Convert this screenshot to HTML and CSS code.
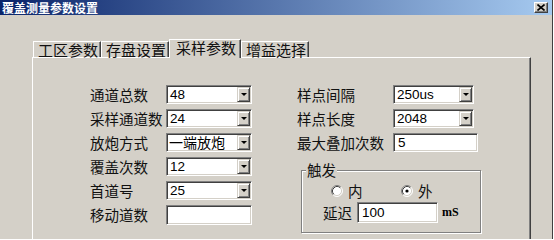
FILE: index.html
```html
<!DOCTYPE html>
<html lang="zh-CN">
<head>
<meta charset="utf-8">
<title>覆盖测量参数设置</title>
<link rel="stylesheet" href="styles.css">
</head>
<body>
<div class="window">
  <div class="titlebar">
    <span class="title">覆盖测量参数设置</span>
    <span class="close"><svg width="8" height="7" viewBox="0 0 8 7"><path d="M0.5 0.5 L7.5 6.5 M7.5 0.5 L0.5 6.5" stroke="#000" stroke-width="1.6"/></svg></span>
  </div>
  <div class="tabs">
    <div class="tab">工区参数</div>
    <div class="tab">存盘设置</div>
    <div class="tab active">采样参数</div>
    <div class="tab">增益选择</div>
  </div>
  <div class="panel">
    <div class="col-left">
      <span class="label">通道总数</span>
      <div class="combo"><span class="val">48</span><span class="btn"><i class="arrow"></i></span></div>
      <span class="label">采样通道数</span>
      <div class="combo"><span class="val">24</span><span class="btn"><i class="arrow"></i></span></div>
      <span class="label">放炮方式</span>
      <div class="combo"><span class="val cjk">一端放炮</span><span class="btn"><i class="arrow"></i></span></div>
      <span class="label">覆盖次数</span>
      <div class="combo"><span class="val">12</span><span class="btn"><i class="arrow"></i></span></div>
      <span class="label">首道号</span>
      <div class="combo"><span class="val">25</span><span class="btn"><i class="arrow"></i></span></div>
      <span class="label">移动道数</span>
      <div class="field wide"></div>
    </div>
    <div class="col-right">
      <div class="rgrid">
        <span class="label">样点间隔</span>
        <div class="combo narrow"><span class="val">250us</span><span class="btn"><i class="arrow"></i></span></div>
        <span class="label">样点长度</span>
        <div class="combo narrow"><span class="val">2048</span><span class="btn"><i class="arrow"></i></span></div>
        <span class="label">最大叠加次数</span>
        <div class="field mid"><span class="val">5</span></div>
      </div>
      <fieldset class="group">
        <legend>触发</legend>
        <div class="radios">
          <span class="radio first">
            <svg width="12" height="12" viewBox="0 0 12 12"><circle cx="6" cy="6" r="5" fill="#fff"/><path d="M2.11 9.89 A5.5 5.5 0 0 1 9.89 2.11" fill="none" stroke="#808080"/><path d="M9.89 2.11 A5.5 5.5 0 0 1 2.11 9.89" fill="none" stroke="#fff"/><path d="M2.82 9.18 A4.5 4.5 0 0 1 9.18 2.82" fill="none" stroke="#404040"/><path d="M9.18 2.82 A4.5 4.5 0 0 1 2.82 9.18" fill="none" stroke="#d4d0c8"/></svg>
            <span class="rtext">内</span>
          </span>
          <span class="radio">
            <svg width="12" height="12" viewBox="0 0 12 12"><circle cx="6" cy="6" r="5" fill="#fff"/><path d="M2.11 9.89 A5.5 5.5 0 0 1 9.89 2.11" fill="none" stroke="#808080"/><path d="M9.89 2.11 A5.5 5.5 0 0 1 2.11 9.89" fill="none" stroke="#fff"/><path d="M2.82 9.18 A4.5 4.5 0 0 1 9.18 2.82" fill="none" stroke="#404040"/><path d="M9.18 2.82 A4.5 4.5 0 0 1 2.82 9.18" fill="none" stroke="#d4d0c8"/><circle cx="6" cy="6" r="1.6" fill="#000"/></svg>
            <span class="rtext">外</span>
          </span>
        </div>
        <div class="delay">
          <span class="label">延迟</span>
          <div class="field delayf"><span class="val">100</span></div>
          <span class="unit">mS</span>
        </div>
      </fieldset>
    </div>
  </div>
</div>
</body>
</html>
```
FILE: styles.css
```css
body {
  margin: 0;
  background: #fff;
}

.window {
  width: 552px;
  height: 239px;
  overflow: hidden;
  background: #d4d0c8;
  border-right: 1px solid #404040;
  font-family: "Noto Sans CJK SC", "Liberation Sans", sans-serif;
  color: #000;
}

.titlebar {
  height: 15px;
  display: flex;
  align-items: center;
  background: linear-gradient(to right, #0a246a, #a6caf0);
}

.title {
  color: #fff;
  font-weight: bold;
  font-size: 12px;
  line-height: 15px;
  padding-left: 2px;
}

.close {
  margin-left: auto;
  margin-right: 4px;
  width: 14px;
  height: 11px;
  box-sizing: border-box;
  background: #d4d0c8;
  border: 1px solid;
  border-color: #fff #404040 #404040 #fff;
  box-shadow: inset -1px -1px #808080;
  display: flex;
  align-items: center;
  justify-content: center;
}

.close svg {
  display: block;
}

.tabs {
  display: flex;
  align-items: flex-end;
  height: 18px;
  margin-top: 24px;
  padding-left: 33px;
  font-size: 15px;
}

.tab {
  height: 16px;
  width: 68px;
  box-sizing: border-box;
  padding-left: 4px;
  border-top: 1px solid #fff;
  border-left: 1px solid #fff;
  border-right: 1px solid #404040;
  box-shadow: inset -1px 0 #808080;
  line-height: 15px;
  white-space: nowrap;
  color: #111;
}

.tab.active {
  height: 19px;
  width: 72px;
  padding-left: 6px;
  padding-bottom: 3px;
  margin-bottom: -1px;
  background: #d4d0c8;
  position: relative;
  z-index: 1;
}

.panel {
  margin-left: 32px;
  width: 499px;
  height: 190px;
  box-sizing: border-box;
  border-top: 1px solid #fff;
  border-left: 1px solid #fff;
  border-right: 1px solid #404040;
  box-shadow: inset -1px 0 #808080;
  padding: 27px 0 0 57px;
  display: flex;
  align-items: flex-start;
  gap: 45px;
}

.label {
  font-size: 14.5px;
  line-height: 19px;
  white-space: nowrap;
  color: #111;
}

.col-left {
  display: grid;
  grid-template-columns: 76px 86px;
  grid-auto-rows: 19px;
  row-gap: 5px;
  align-items: center;
}

.col-right {
  display: flex;
  flex-direction: column;
}

.rgrid {
  display: grid;
  grid-template-columns: 96px auto;
  grid-auto-rows: 19px;
  row-gap: 5px;
  align-items: center;
}

.combo {
  display: flex;
  align-items: center;
  width: 86px;
  height: 19px;
  box-sizing: border-box;
  padding: 1px;
  background: #fff;
  border: 1px solid;
  border-color: #808080 #fff #fff #808080;
  box-shadow: inset 1px 1px #404040, inset -1px -1px #d4d0c8;
}

.combo.narrow {
  width: 81px;
}

.val {
  padding-left: 2px;
  font-family: "Liberation Sans", "Noto Sans CJK SC", sans-serif;
  font-size: 13.5px;
  line-height: 15px;
  white-space: nowrap;
}

.val.cjk {
  font-family: "Noto Sans CJK SC", sans-serif;
  font-size: 14px;
  padding-left: 1px;
}

.btn {
  margin-left: auto;
  width: 13px;
  height: 100%;
  box-sizing: border-box;
  background: #d4d0c8;
  border: 1px solid;
  border-color: #d4d0c8 #404040 #404040 #d4d0c8;
  box-shadow: inset 1px 1px #fff, inset -1px -1px #808080;
  display: flex;
  align-items: center;
  justify-content: center;
}

.arrow {
  width: 0;
  height: 0;
  border-left: 3px solid transparent;
  border-right: 3px solid transparent;
  border-top: 3px solid #000;
}

.field {
  display: flex;
  align-items: center;
  height: 19px;
  box-sizing: border-box;
  padding: 1px 1px 1px 2px;
  background: #fff;
  border: 1px solid;
  border-color: #808080 #fff #fff #808080;
  box-shadow: inset 1px 1px #404040, inset -1px -1px #d4d0c8;
}

.field.wide {
  width: 86px;
  height: 20px;
}

.field.mid {
  width: 85px;
}

.field.delayf {
  width: 81px;
  height: 21px;
}

.group {
  margin: 11px 0 0 4px;
  width: 180px;
  box-sizing: border-box;
  border: 1px solid #808080;
  box-shadow: inset 1px 1px #fff, 1px 1px #fff;
  padding: 0 0 9px 0;
  min-width: 0;
}

.group legend {
  margin-left: 4px;
  padding: 0 1px;
  font-size: 14.5px;
  line-height: 14px;
  background: #d4d0c8;
  color: #111;
}

.radios {
  display: flex;
  align-items: center;
  margin-top: 6px;
  padding-left: 29px;
  height: 15px;
}

.radio {
  display: flex;
  align-items: center;
  gap: 5px;
}

.radio.first {
  width: 70px;
}

.radio svg {
  display: block;
}

.rtext {
  font-size: 14.5px;
  line-height: 15px;
  color: #111;
}

.delay {
  display: flex;
  align-items: center;
  margin-top: 4px;
  padding-left: 21px;
  gap: 5px;
}

.unit {
  margin-left: -1px;
  font-family: "Liberation Serif", serif;
  font-size: 12px;
  font-weight: bold;
  line-height: 15px;
}
```
